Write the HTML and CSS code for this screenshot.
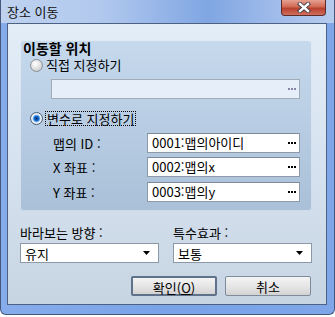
FILE: index.html
```html
<!DOCTYPE html>
<html lang="ko">
  <head>
    <meta charset="UTF-8" />
    <title>장소 이동</title>
    <link rel="stylesheet" href="styles.css">
  </head>
  <body>
    <div class="window">
      <div class="titlebar">
        <span class="title">장소 이동</span>
        <button class="close" aria-label="닫기">
          <svg width="14" height="11" viewBox="0 0 14 11">
            <path d="M3 2 L11 9 M11 2 L3 9" stroke="#3a3a4a" stroke-width="4.2" stroke-linecap="square" />
            <path d="M3 2 L11 9 M11 2 L3 9" stroke="#ffffff" stroke-width="2.4" stroke-linecap="square" />
          </svg>
        </button>
      </div>

      <div class="client">
        <div class="group">
          <div class="group-title">이동할 위치</div>

          <div class="radio-row">
            <span class="radio"></span>
            <span class="radio-text">직접 지정하기</span>
          </div>

          <div class="field field-disabled">
            <span class="field-text"></span>
            <svg class="dots" width="8" height="2"><rect x="0" width="2" height="2" /><rect x="3" width="2" height="2" /><rect x="6" width="2" height="2" /></svg>
          </div>

          <div class="radio-row radio-row-2">
            <span class="radio radio-on"></span>
            <span class="radio-text focus">변수로 지정하기</span>
          </div>

          <div class="var-row">
            <span class="var-label">맵의 ID :</span>
            <div class="field">
              <span class="field-text">0001:맵의아이디</span>
              <svg class="dots" width="8" height="2"><rect x="0" width="2" height="2" /><rect x="3" width="2" height="2" /><rect x="6" width="2" height="2" /></svg>
            </div>
          </div>
          <div class="var-row var-row-2">
            <span class="var-label">X 좌표 :</span>
            <div class="field">
              <span class="field-text">0002:맵의x</span>
              <svg class="dots" width="8" height="2"><rect x="0" width="2" height="2" /><rect x="3" width="2" height="2" /><rect x="6" width="2" height="2" /></svg>
            </div>
          </div>
          <div class="var-row var-row-3">
            <span class="var-label">Y 좌표 :</span>
            <div class="field">
              <span class="field-text">0003:맵의y</span>
              <svg class="dots" width="8" height="2"><rect x="0" width="2" height="2" /><rect x="3" width="2" height="2" /><rect x="6" width="2" height="2" /></svg>
            </div>
          </div>
        </div>

        <div class="options">
          <div class="option">
            <div class="opt-label">바라보는 방향 :</div>
            <div class="select">
              <span>유지</span>
              <svg width="7" height="4" viewBox="0 0 7 4"><path d="M0 0 H7 L3.5 4 Z" fill="#000" /></svg>
            </div>
          </div>
          <div class="option">
            <div class="opt-label">특수효과 :</div>
            <div class="select">
              <span>보통</span>
              <svg width="7" height="4" viewBox="0 0 7 4"><path d="M0 0 H7 L3.5 4 Z" fill="#000" /></svg>
            </div>
          </div>
        </div>

        <div class="buttons">
          <button class="btn btn-default">확인(<u>O</u>)</button>
          <button class="btn">취소</button>
        </div>
      </div>
    </div>
  </body>
</html>
```

FILE: styles.css
```css
body {
  margin: 0;
  background-color: #ffffff;
  font-family: "Noto Sans CJK KR", "DejaVu Sans", sans-serif;
  font-size: 13px;
  color: #000000;
}
.window {
  width: 335px;
  height: 315px;
  box-sizing: border-box;
  border: 1px solid #45577a;
  border-top: none;
  border-radius: 0 0 6px 6px;
  background: linear-gradient(90deg, #86aceb 0%, #7aa3e8 50%, #7ea6e9 100%);
}
.titlebar {
  height: 23px;
  display: flex;
  justify-content: space-between;
  align-items: flex-start;
  padding: 0 8px 0 6px;
  background: linear-gradient(90deg, #bed2ef 0%, #b2c9ee 30%, #80a6e3 62%, #9fbbea 82%, #b6ccee 100%);
}
.title {
  line-height: 24px;
  color: #111111;
}
.close {
  width: 45px;
  height: 16px;
  padding: 0;
  border: 1px solid #5e2a2a;
  border-top: none;
  border-radius: 0 0 4px 4px;
  background: linear-gradient(#e6a090 0%, #d06a55 45%, #b8402c 55%, #d07060 100%);
  display: flex;
  align-items: center;
  justify-content: center;
}
.client {
  margin-left: 6px;
  width: 320px;
  height: 282px;
  box-sizing: border-box;
  border: 1px solid #4d6183;
  background: linear-gradient(#e3edf8 0%, #d6e2ef 50%, #c7d4e1 100%);
}
.group {
  margin: 16px 0 0 12px;
  width: 292px;
  height: 171px;
  box-sizing: border-box;
  padding-right: 12px;
  display: flex;
  flex-direction: column;
  border-radius: 4px;
  background: linear-gradient(#c6d9ed 0%, #b8cde3 50%, #a9c0d8 100%);
  box-shadow: inset 0 0 0 1px rgba(255, 255, 255, 0.45);
}
.group-title {
  margin-left: 3px;
  height: 16px;
  line-height: 17px;
  font-size: 14px;
  font-weight: bold;
}
.radio-row {
  margin-top: 2px;
  height: 14px;
  padding-left: 10px;
  display: flex;
  align-items: center;
  gap: 3px;
}
.radio-row-2 {
  margin-top: 12px;
}
.radio {
  width: 11px;
  height: 11px;
  border-radius: 50%;
  border: 1px solid #8a8f96;
  background: radial-gradient(circle at 40% 35%, #ffffff 0%, #e4e4e4 45%, #b9b9b9 100%);
  flex: none;
}
.radio-on {
  border-color: #4a5f7a;
  background: radial-gradient(circle at 50% 50%, #0a2f6a 0%, #1a6ad0 30%, #7fc0f5 45%, #f4f6f8 55%, #c8ccd2 100%);
}
.radio-text {
  line-height: 14px;
}
.focus {
  outline: 1px dotted #000000;
  padding: 0 1px;
  line-height: 13px;
}
.field {
  height: 20px;
  box-sizing: border-box;
  border: 1px solid #8e9aaa;
  border-top-color: #7d8a9a;
  background-color: #ffffff;
  display: flex;
  align-items: center;
  justify-content: space-between;
  padding: 0 3px 0 4px;
}
.field-disabled {
  margin: 7px 0 0 31px;
  background-color: #e6eff9;
  border-color: #a3abb4;
}
.dots {
  fill: #000000;
}
.field-disabled .dots {
  fill: #8684a8;
}
.field-text {
  line-height: 18px;
  white-space: nowrap;
}
.var-row {
  margin-top: 8px;
  display: grid;
  grid-template-columns: 94px 1fr;
  align-items: center;
  padding-left: 33px;
}
.var-row-2 {
  margin-top: 4px;
}
.var-row-3 {
  margin-top: 5px;
}
.options {
  margin: 15px 0 0 12px;
  display: grid;
  grid-template-columns: 139px 139px;
  column-gap: 14px;
}
.opt-label {
  line-height: 14px;
  margin-bottom: 3px;
}
.select {
  height: 20px;
  box-sizing: border-box;
  border: 1px solid #8b98a6;
  background-color: #ffffff;
  display: flex;
  align-items: center;
  justify-content: space-between;
  padding: 0 8px 0 4px;
}
.buttons {
  margin-top: 13px;
  padding-right: 15px;
  display: flex;
  justify-content: flex-end;
  gap: 8px;
}
.btn {
  width: 86px;
  height: 20px;
  padding: 0;
  font-family: "Noto Sans CJK KR", "DejaVu Sans", sans-serif;
  font-size: 13px;
  color: #000000;
  border: 1px solid #7d8b9b;
  border-radius: 2px;
  background: linear-gradient(#f4f4f4 0%, #e6e6e6 50%, #d3d3d3 100%);
}
.btn-default {
  border: 2px solid #5f7289;
}
.btn u {
  text-underline-offset: 1px;
}
```
